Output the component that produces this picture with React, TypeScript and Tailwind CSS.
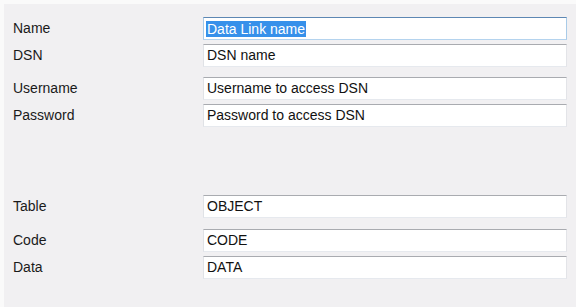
import React from 'react';

type Field = { label: string; value: string; gap: string; focused?: boolean };

const fields: Field[] = [
  { label: 'Name', value: 'Data Link name', gap: 'mt-0', focused: true },
  { label: 'DSN', value: 'DSN name', gap: 'mt-[4px]' },
  { label: 'Username', value: 'Username to access DSN', gap: 'mt-[10px]' },
  { label: 'Password', value: 'Password to access DSN', gap: 'mt-[4px]' },
  { label: 'Table', value: 'OBJECT', gap: 'mt-[68px]' },
  { label: 'Code', value: 'CODE', gap: 'mt-[11px]' },
  { label: 'Data', value: 'DATA', gap: 'mt-[4px]' },
];

function Row({ label, value, gap, focused }: Field) {
  return (
    <div className={`flex items-center ${gap}`}>
      <div className="w-[190px] shrink-0 text-[14px] text-[#1a1a1a]">{label}</div>
      <div
        className={
          focused
            ? 'flex h-[23px] w-[364px] items-center border border-t-[#5d87b3] border-r-[#a9cbe8] border-b-[#b4d3ee] border-l-[#a9cbe8] bg-white pl-[2px]'
            : 'flex h-[23px] w-[364px] items-center border border-t-[#a9abb0] border-r-[#e3e4e8] border-b-[#e6e9ee] border-l-[#e0e2e6] bg-white pl-[3px]'
        }
      >
        {focused ? (
          <span className="bg-[#3690ea] px-[1px] text-[14px] leading-[16px] text-white">{value}</span>
        ) : (
          <span className="text-[14px] text-[#111]">{value}</span>
        )}
      </div>
    </div>
  );
}

export default function App() {
  return (
    <main
      className="h-[307px] w-[576px] border-t-4 border-l-4 border-t-[#fafafa] border-l-[#fafafa] bg-[#f1f0f2] pt-[13px] pl-[9px]"
      style={{ fontFamily: '"Liberation Sans", Arial, sans-serif' }}
    >
      <div className="flex flex-col">
        {fields.map((f) => (
          <Row key={f.label} {...f} />
        ))}
      </div>
    </main>
  );
}
